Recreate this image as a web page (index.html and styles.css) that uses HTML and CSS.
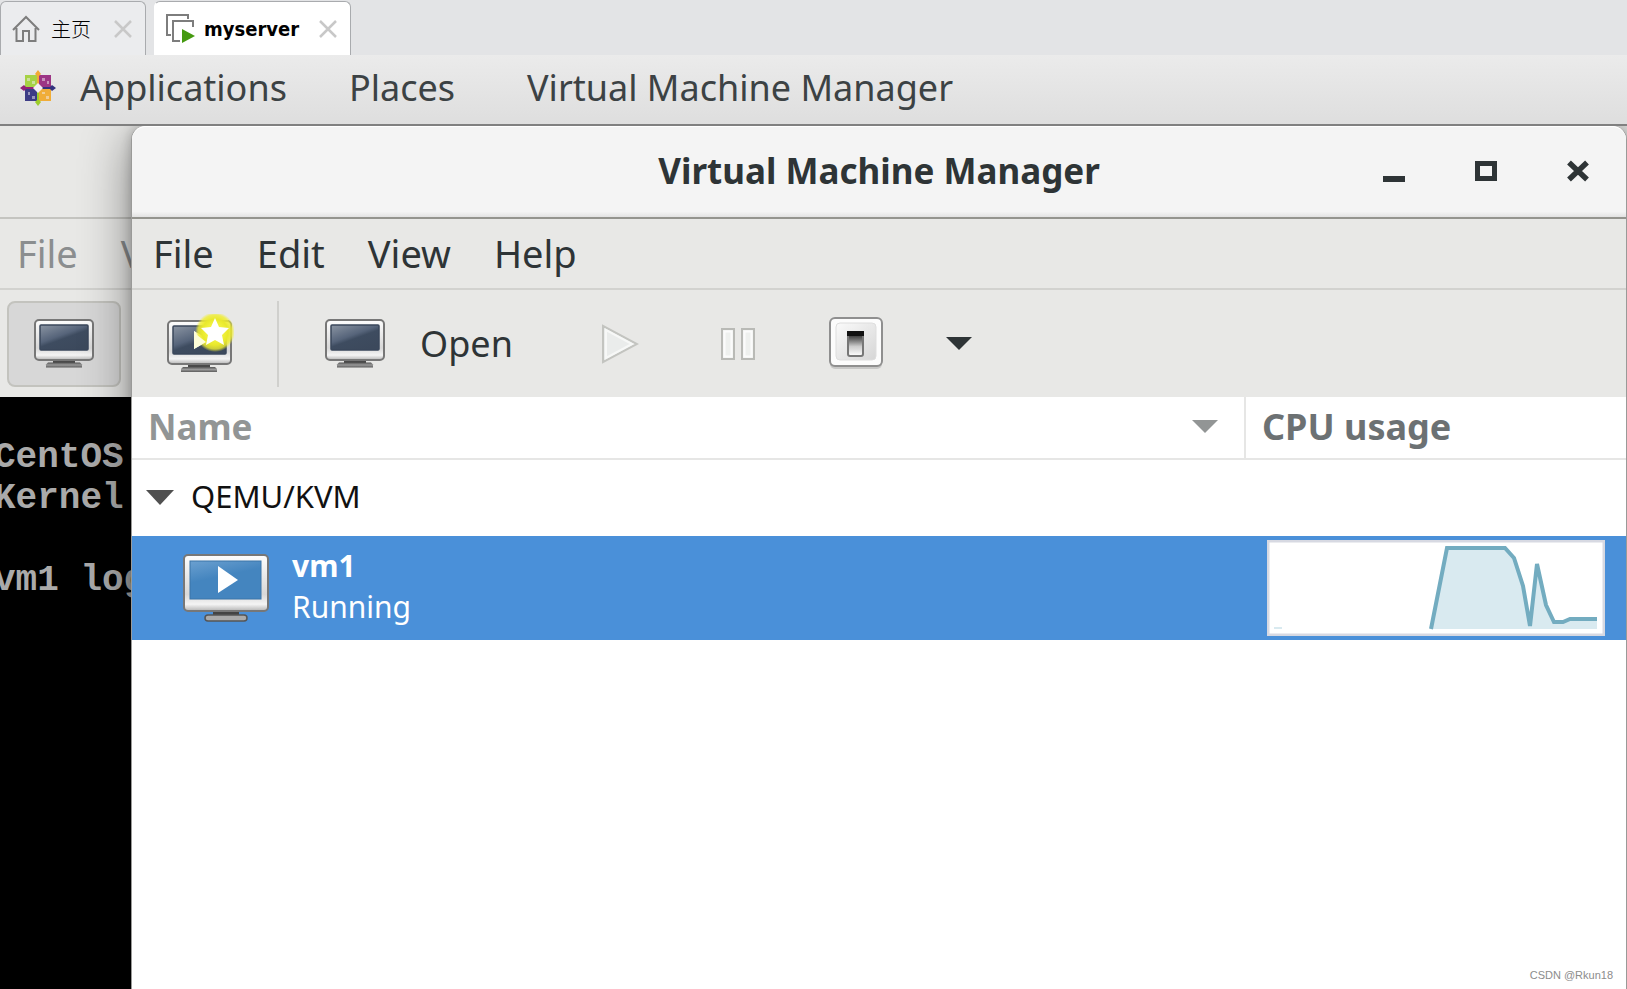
FILE: index.html
```html
<!DOCTYPE html>
<html lang="en">
<head>
<meta charset="utf-8">
<title>myserver</title>
<link rel="stylesheet" href="styles.css">
</head>
<body>
<svg class="defs" width="0" height="0" aria-hidden="true">
  <defs>
    <linearGradient id="case" x1="0" y1="0" x2="0" y2="1">
      <stop offset="0" stop-color="#fdfdfd"/><stop offset=".7" stop-color="#d8d8d8"/><stop offset=".88" stop-color="#f4f4f4"/><stop offset="1" stop-color="#b4b4b4"/>
    </linearGradient>
    <linearGradient id="screen" x1="0" y1="0" x2=".7" y2="1">
      <stop offset="0" stop-color="#8b95a3"/><stop offset=".48" stop-color="#56647a"/><stop offset=".6" stop-color="#3e4c60"/><stop offset="1" stop-color="#3c495c"/>
    </linearGradient>
    <linearGradient id="blue" x1="0" y1="0" x2=".4" y2="1">
      <stop offset="0" stop-color="#6ba0d0"/><stop offset=".5" stop-color="#4485bf"/><stop offset="1" stop-color="#4485bf"/>
    </linearGradient>
    <linearGradient id="foot" x1="0" y1="0" x2="0" y2="1">
      <stop offset="0" stop-color="#555"/><stop offset=".5" stop-color="#999"/><stop offset="1" stop-color="#5c5c5c"/>
    </linearGradient>
    <linearGradient id="rocker" x1="0" y1="0" x2="0" y2="1">
      <stop offset="0" stop-color="#111"/><stop offset=".35" stop-color="#777"/><stop offset=".6" stop-color="#ccc"/><stop offset="1" stop-color="#fff"/>
    </linearGradient>
    <linearGradient id="plate" x1="0" y1="0" x2="1" y2="1">
      <stop offset="0" stop-color="#fafafa"/><stop offset="1" stop-color="#d6d6d6"/>
    </linearGradient>
    <radialGradient id="glow">
      <stop offset="0" stop-color="#ffff60"/><stop offset=".65" stop-color="#e9e92c"/><stop offset=".85" stop-color="#f0ee30" stop-opacity=".8"/><stop offset="1" stop-color="#f0ee30" stop-opacity="0"/>
    </radialGradient>
    <symbol id="monitor" viewBox="0 0 60 50">
      <path d="M19 40h22v4H19z" fill="#4a4a4a"/>
      <path d="M14 43.500h32l2 2v3H12v-3z" fill="url(#foot)"/>
      <rect x="1" y="1" width="58" height="40" rx="4" fill="url(#case)" stroke="#777" stroke-width="2"/>
      <rect x="6" y="6" width="48" height="25" rx="1" fill="url(#screen)" stroke="#3a475b" stroke-width="1.500"/>
    </symbol>
  </defs>
</svg>

<header class="tabs">
  <div class="tab">
    <svg class="tab-icon" width="28" height="28" viewBox="0 0 28 28" fill="none" stroke="#7d7d7d" stroke-width="2"><path d="M1 15 14 2l13 13M4.500 13v13H11V16h6v10h6.500V13"/></svg>
    <span class="tab-name" lang="zh">主页</span>
    <button class="tab-close" aria-label="Close home"><svg width="18" height="18" viewBox="0 0 18 18" stroke="#c8c8c8" stroke-width="2.500"><path d="M1 1l16 16M17 1 1 17"/></svg></button>
  </div>
  <div class="tab tab-active">
    <svg class="tab-icon" width="30" height="30" viewBox="0 0 30 30"><path d="M5 21H1V1h21v4M14 27H7V7h20v6" fill="none" stroke="#7d7d7d" stroke-width="2"/><path d="M16 15v14l13-7z" fill="#459a10"/></svg>
    <span class="tab-name">myserver</span>
    <button class="tab-close" aria-label="Close myserver"><svg width="18" height="18" viewBox="0 0 18 18" stroke="#c8c8c8" stroke-width="2.500"><path d="M1 1l16 16M17 1 1 17"/></svg></button>
  </div>
</header>

<nav class="panel">
  <svg width="36" height="36" viewBox="0 0 36 36">
    <rect x="5" y="5" width="12" height="12" fill="#a6d245"/><rect x="19" y="5" width="12" height="12" fill="#9c3585"/>
    <rect x="5" y="19" width="12" height="12" fill="#3d3c86"/><rect x="19" y="19" width="12" height="12" fill="#f0ad38"/>
    <g fill="#f2eef2" opacity=".5"><path d="M7 8h3v3H7zM12 11h3v3h-3zM22 8h3v3h-3zM27 11h2v3h-2zM8 22h2v3H8zM12 26h3v3h-3zM22 22h3v2h-3zM26 26h3v3h-3z"/></g>
    <path d="M18 0l3 4-2 2v9h-2V6l-2-2z" fill="#f2a935"/><path d="M36 18l-4 3-2-2h-9v-2h9l2-2z" fill="#33327f"/>
    <path d="M18 36l-3-4 2-2v-9h2v9l2 2z" fill="#9ccd2a"/><path d="M0 18l4-3 2 2h9v2H6l-2 2z" fill="#932279"/>
    <path d="M18 13l5 5-5 5-5-5z" fill="#f4eef4"/>
  </svg>
  <button class="panel-item">Applications</button>
  <button class="panel-item">Places</button>
  <button class="panel-item panel-app">Virtual Machine Manager</button>
</nav>

<main class="desktop">
  <section class="console" aria-label="vm1 console">
    <div class="titlebar"></div>
    <div class="menubar"><button>File</button><button>View</button></div>
    <div class="toolbar">
      <button class="tool tool-pressed" aria-label="Console"><svg width="60" height="50"><use href="#monitor"/></svg></button>
    </div>
    <pre class="terminal">CentOS
Kernel

vm1 log</pre>
  </section>

  <section class="manager">
    <div class="titlebar">
      <h1>Virtual Machine Manager</h1>
      <div class="controls">
        <button aria-label="Minimize"><svg width="24" height="22" viewBox="0 0 24 22"><path d="M1 16h22v6H1z" fill="#2e3436"/></svg></button>
        <button aria-label="Maximize"><svg width="24" height="22" viewBox="0 0 24 22"><path d="M3.500 3.500h17v15h-17z" fill="none" stroke="#2e3436" stroke-width="5"/></svg></button>
        <button aria-label="Close"><svg width="24" height="22" viewBox="0 0 24 22"><path d="M3 2.500l18 17M21 2.500l-18 17" stroke="#2e3436" stroke-width="5.500"/></svg></button>
      </div>
    </div>
    <div class="menubar"><button>File</button><button>Edit</button><button>View</button><button>Help</button></div>
    <div class="toolbar">
      <button class="tool" aria-label="New virtual machine">
        <svg width="68" height="60" viewBox="0 0 68 60">
          <path d="M22 49h22v4H22z" fill="#4a4a4a"/><path d="M17 53h32l2 2v3H15v-3z" fill="url(#foot)"/>
          <rect x="2" y="7" width="63" height="43" rx="4" fill="url(#case)" stroke="#777" stroke-width="2"/>
          <rect x="7" y="12" width="53" height="28" rx="1" fill="url(#screen)" stroke="#3a475b" stroke-width="1.500"/>
          <path d="M28 17v18l16-9z" fill="#fff"/>
          <circle cx="49" cy="18" r="20" fill="url(#glow)"/>
          <path d="M28 17v18l12-7-9-7z" fill="#fdfdd8"/>
          <path d="M49 4l4 9 10 1-7 7 2 10-9-5-9 5 2-10-7-7 10-1z" fill="#fff"/>
        </svg>
      </button>
      <span class="divider"></span>
      <button class="tool tool-open"><svg width="60" height="50"><use href="#monitor"/></svg>Open</button>
      <button class="tool" aria-label="Run" disabled><svg width="38" height="40" viewBox="0 0 38 40"><path d="M2 2l34 18L2 38z" fill="#eaeceb" stroke="#c3c4c0" stroke-width="2"/><path d="M5 6l26 14L5 34z" fill="none" stroke="#f7f8f7" stroke-width="2"/></svg></button>
      <button class="tool" aria-label="Pause" disabled><svg width="34" height="32" viewBox="0 0 34 32" fill="#eef0ee" stroke="#b9bab6" stroke-width="2"><path d="M1 1h12v30H1zM21 1h12v30H21z"/><path d="M3.500 3.500h7v25h-7zM23.500 3.500h7v25h-7z" fill="none" stroke="#fbfbfb"/></svg></button>
      <button class="tool" aria-label="Shut down"><svg width="56" height="54" viewBox="0 0 56 54"><rect x="2" y="2" width="52" height="50" rx="5" fill="#999" opacity=".4"/><rect x="2" y="1" width="52" height="48" rx="5" fill="#fcfcfc" stroke="#8f8f8f" stroke-width="2"/><rect x="8" y="6" width="40" height="37" rx="4" fill="url(#plate)" stroke="#dedede"/><rect x="20" y="15" width="15" height="24" rx="2" fill="url(#rocker)" stroke="#777" stroke-width="2"/><path d="M19 14h17v5H19z" fill="#111"/></svg></button>
      <button class="tool tool-more" aria-label="Shut down options"><svg width="26" height="13" viewBox="0 0 26 13"><path d="M0 0h26L13 13z" fill="#2e3436"/></svg></button>
    </div>
    <table class="machines">
      <thead>
        <tr>
          <th scope="col"><div class="head-cell"><span>Name</span><svg width="26" height="13" viewBox="0 0 26 13"><path d="M0 0h26L13 13z" fill="#929595"/></svg></div></th>
          <th scope="col" class="cpu">CPU usage</th>
        </tr>
      </thead>
      <tbody>
        <tr class="host">
          <td><div class="host-cell"><svg width="28" height="15" viewBox="0 0 28 15"><path d="M0 0h28L14 15z" fill="#505050"/></svg><span>QEMU/KVM</span></div></td>
          <td></td>
        </tr>
        <tr class="guest">
          <td><div class="guest-cell">
            <svg width="88" height="70" viewBox="0 0 88 70">
              <path d="M31 58h26v5H31z" fill="#444"/><rect x="23" y="62" width="42" height="6" rx="3" fill="#aaa" stroke="#555" stroke-width="1.500"/>
              <rect x="2" y="2" width="84" height="56" rx="4" fill="url(#case)" stroke="#777" stroke-width="2"/>
              <rect x="8" y="8" width="71" height="38" fill="url(#blue)" stroke="#3b75a8"/>
              <path d="M36 13v27l20-13z" fill="#fff"/>
            </svg>
            <div class="guest-text"><strong>vm1</strong><span>Running</span></div>
          </div></td>
          <td class="cpu-cell">
            <svg class="graph" width="338" height="96" viewBox="0 0 338 96" role="img" aria-label="CPU usage of vm1">
              <rect x="1" y="1" width="336" height="94" fill="#fff" stroke="#d7d9e2" stroke-width="3"/>
              <path d="M7 88h8" stroke="#d9eaf0" stroke-width="2"/>
              <path d="M164 89 180 8h58l9 10 9 28 7 38 7-56 9 37 8 17h9l7-3h27v10z" fill="#d9eaf0"/>
              <path d="M164 89 180 8h58l9 10 9 28 7 40 7-62 9 41 8 17h9l7-3h27" fill="none" stroke="#73acc0" stroke-width="4"/>
            </svg>
          </td>
        </tr>
      </tbody>
    </table>
  </section>
  <p class="watermark">CSDN @Rkun18</p>
</main>
</body>
</html>
```
FILE: styles.css
```css
* { box-sizing: border-box; }

body {
  margin: 0;
  min-height: 100vh;
  display: flex;
  flex-direction: column;
  font-family: "Noto Sans", "Open Sans", sans-serif;
  color: #2e3436;
  overflow-x: hidden;
}

.defs { position: absolute; }

button {
  display: flex;
  align-items: center;
  justify-content: center;
  padding: 0;
  border: 0;
  background: none;
  font: inherit;
  color: inherit;
}

svg { display: block; flex: none; }

/* Browser-style tabs */
.tabs {
  display: flex;
  gap: 8px;
  height: 55px;
  padding-top: 1px;
  background: #e3e4e6;
}

.tab {
  display: flex;
  align-items: center;
  padding: 0 13px 0 11px;
  border: 1px solid #a9abae;
  border-bottom: 0;
  border-radius: 6px 6px 0 0;
  background: #ebecee;
  color: #000;
  font-size: 20px;
}

.tab-active {
  padding-left: 11px;
  border-left-color: #fff;
  background: #fff;
}

.tab-name {
  margin: 0 23px 0 11px;
  font-family: "Noto Sans CJK SC", sans-serif;
  font-weight: 300;
}

.tab-active .tab-name {
  margin: 0 20px 0 8px;
  font-family: "DejaVu Sans Condensed", "Noto Sans", sans-serif;
  font-weight: 700;
}

/* Desktop top panel */
.panel {
  position: relative;
  z-index: 1;
  display: flex;
  align-items: center;
  gap: 62px;
  height: 71px;
  padding: 0 20px 4px;
  border-bottom: 2px solid #808080;
  background: linear-gradient(#ebebeb, #dedede);
  color: #3c4244;
  font-size: 36px;
}

.panel svg { margin-right: -38px; }
.panel-app { margin-left: 10px; }
.panel-item { white-space: nowrap; line-height: 48px; }

/* Windows */
.desktop {
  position: relative;
  flex: 1;
  display: flex;
  background: #e8e8e6;
}

.console {
  display: flex;
  flex-direction: column;
  width: 131px;
  overflow: hidden;
  background: #e8e8e6;
}

.manager {
  flex: 1;
  position: relative;
  border: 1px solid #9a9a98;
  border-width: 0 1px;
  border-radius: 14px 14px 0 0;
  background: #fff;
  box-shadow: 0 10px 50px rgba(0, 0, 0, .45), 0 0 12px rgba(0, 0, 0, .2);
}

.titlebar {
  position: relative;
  display: flex;
  align-items: center;
  justify-content: center;
  height: 93px;
  padding-bottom: 3px;
  border-bottom: 2px solid #c4c4c0;
}

.manager .titlebar {
  border-top: 1px solid #fff;
  border-bottom-color: #94948e;
  border-radius: 14px 14px 0 0;
  background: linear-gradient(#f4f4f4 94%, #e2e2e2);
}

.titlebar h1 {
  margin: 0;
  font-size: 35px;
  font-weight: 700;
}

.controls {
  position: absolute;
  right: 36px;
  display: flex;
  gap: 68px;
}

.menubar {
  display: flex;
  align-items: center;
  gap: 43px;
  height: 71px;
  padding: 0 0 2px 21px;
  border-bottom: 2px solid #d2d2cf;
  background: #e8e8e6;
  font-size: 38px;
  line-height: 48px;
}

.console .menubar {
  padding-left: 17px;
  background: none;
  color: #8b8e8f;
}

.toolbar {
  display: flex;
  align-items: center;
  gap: 4px;
  height: 107px;
  padding-left: 11px;
  background: #e8e8e6;
}

.console .toolbar {
  padding-left: 7px;
  background: none;
}

.tool {
  flex: none;
  width: 114px;
  height: 86px;
}

.tool-pressed {
  border: 2px solid #c3c3be;
  border-radius: 8px;
  background: #d7d7d7;
}

.tool-open {
  width: 276px;
  gap: 35px;
  padding-right: 4px;
  font-size: 36px;
}

.tool-more { width: 84px; }

.divider {
  width: 2px;
  height: 86px;
  margin: 0 0 0 16px;
  background: #d0d0cd;
}

.terminal {
  flex: 1;
  margin: 0 0 0 -6px;
  padding-top: 40px;
  background: #000;
  color: #aaa;
  font: 700 36px/41px "Liberation Mono", monospace;
}

/* Machine list */
.machines {
  width: 100%;
  border-collapse: collapse;
  table-layout: fixed;
}

.machines th {
  height: 62px;
  padding: 0 16px 2px;
  border-bottom: 2px solid #e6e6e5;
  color: #929595;
  font-size: 35px;
  line-height: 48px;
  text-align: left;
}

.machines .cpu {
  width: 381px;
  border-left: 2px solid #e6e6e5;
  color: #6c7173;
  font-size: 36px;
}

.machines td { padding: 0; }

.head-cell {
  display: flex;
  align-items: center;
  justify-content: space-between;
  padding-right: 10px;
}

.host-cell {
  display: flex;
  align-items: center;
  gap: 17px;
  height: 76px;
  padding: 0 14px 2px;
  color: #111;
  font-size: 31px;
}

.host-cell span { padding-bottom: 2px; }

.guest { background: #4a90d9; }

.guest-cell {
  display: flex;
  align-items: center;
  gap: 22px;
  height: 104px;
  padding-left: 50px;
}

.guest-text {
  display: flex;
  flex-direction: column;
  padding-bottom: 4px;
  color: #fff;
  font-size: 30px;
  line-height: 41px;
}

.graph { margin-left: 22px; }

.watermark {
  position: absolute;
  right: 14px;
  bottom: 8px;
  margin: 0;
  color: #8c8c8c;
  font: 11px "Liberation Sans", sans-serif;
}
```
